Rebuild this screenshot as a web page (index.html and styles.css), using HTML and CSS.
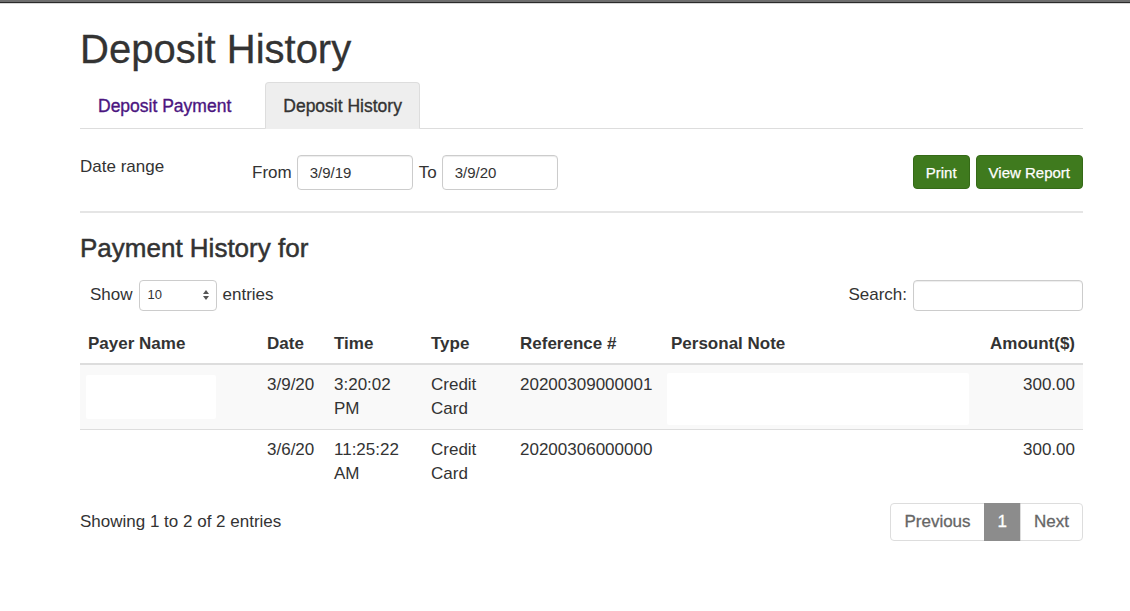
FILE: index.html
```html
<!DOCTYPE html>
<html lang="en">
  <head>
    <meta charset="UTF-8" />
    <meta name="viewport" content="width=device-width, initial-scale=1.0" />
    <title>Deposit History</title>
    <link rel="stylesheet" href="styles.css">
  </head>
  <body>
    <div class="top-bar"></div>
    <div class="container">
      <h1 class="page-title">Deposit History</h1>

      <ul class="nav-tabs">
        <li><a href="#" class="tab-link">Deposit Payment</a></li>
        <li class="active"><a href="#" class="tab-link">Deposit History</a></li>
      </ul>

      <div class="filter-row">
        <div class="filter-label">Date range</div>
        <div class="filter-dates">
          <label>From</label>
          <input type="text" class="form-control date-input" value="3/9/19" />
          <label>To</label>
          <input type="text" class="form-control date-input" value="3/9/20" />
        </div>
        <div class="filter-actions">
          <button class="btn btn-green" type="button">Print</button>
          <button class="btn btn-green" type="button">View Report</button>
        </div>
      </div>

      <hr class="divider" />

      <h3 class="section-title">Payment History for</h3>

      <div class="dt-top">
        <div class="dt-length">
          Show
          <span class="select-box">10
            <svg width="8" height="12" viewBox="0 0 8 12"><path d="M4 1 L7 5 H1 Z M4 11 L7 7 H1 Z" fill="#555"/></svg>
          </span>
          entries
        </div>
        <div class="dt-search">
          Search:
          <input type="text" class="form-control search-input" />
        </div>
      </div>

      <table class="history-table">
        <colgroup>
          <col style="width: 179px" />
          <col style="width: 67px" />
          <col style="width: 97px" />
          <col style="width: 89px" />
          <col style="width: 151px" />
          <col style="width: 314px" />
          <col />
        </colgroup>
        <thead>
          <tr>
            <th>Payer Name</th>
            <th>Date</th>
            <th>Time</th>
            <th>Type</th>
            <th>Reference #</th>
            <th>Personal Note</th>
            <th class="num">Amount($)</th>
          </tr>
        </thead>
        <tbody>
          <tr class="striped">
            <td><div class="blank blank-name"></div></td>
            <td>3/9/20</td>
            <td>3:20:02<br />PM</td>
            <td>Credit<br />Card</td>
            <td>20200309000001</td>
            <td><div class="blank blank-note"></div></td>
            <td class="num">300.00</td>
          </tr>
          <tr>
            <td></td>
            <td>3/6/20</td>
            <td>11:25:22<br />AM</td>
            <td>Credit<br />Card</td>
            <td>20200306000000</td>
            <td></td>
            <td class="num">300.00</td>
          </tr>
        </tbody>
      </table>

      <div class="dt-bottom">
        <div class="dt-info">Showing 1 to 2 of 2 entries</div>
        <ul class="pagination">
          <li><a href="#">Previous</a></li>
          <li class="active"><a href="#">1</a></li>
          <li><a href="#">Next</a></li>
        </ul>
      </div>
    </div>
  </body>
</html>
```

FILE: styles.css
```css
html,
body {
  margin: 0;
  padding: 0;
}

body {
  font-family: "Liberation Sans", Arial, sans-serif;
  font-size: 17px;
  line-height: 1.42857;
  color: #333;
  background: #fff;
}

.top-bar {
  height: 2px;
  background: #6e6e6e;
  border-bottom: 1px solid #2a2a2a;
  box-shadow: 0 1px 0 #d8d8d8;
}

.container {
  width: 1003px;
  margin-left: 80px;
}

.page-title {
  font-size: 40px;
  font-weight: 500;
  line-height: 1.1;
  margin: 24px 0 11px;
  -webkit-text-stroke: 0.3px #333;
}

/* tabs */
.nav-tabs {
  list-style: none;
  margin: 0;
  padding: 0;
  display: flex;
  border-bottom: 1px solid #ddd;
}

.nav-tabs li {
  margin-bottom: -1px;
  margin-right: 16px;
}

.nav-tabs .tab-link {
  display: block;
  padding: 12px 17px 11px;
  font-size: 17.5px;
  color: #4b1580;
  text-decoration: none;
  border: 1px solid transparent;
  border-radius: 4px 4px 0 0;
  line-height: 22px;
  -webkit-text-stroke: 0.35px currentColor;
}

.nav-tabs li.active .tab-link {
  color: #333;
  background: #eee;
  border-color: #ddd;
  border-bottom-color: #eee;
}

/* date filter */
.filter-row {
  display: flex;
  align-items: flex-start;
  padding-top: 26px;
}

.filter-label {
  width: 172px;
  line-height: 24px;
}

.filter-dates {
  display: flex;
  align-items: center;
  gap: 5px;
  flex: 1;
}

.filter-dates label {
  line-height: 35px;
}

.form-control {
  font-family: "Liberation Sans", Arial, sans-serif;
  font-size: 15px;
  color: #333;
  border: 1px solid #ccc;
  border-radius: 4px;
  box-sizing: border-box;
  box-shadow: inset 0 1px 1px rgba(0, 0, 0, 0.075);
  outline: none;
}

.date-input {
  width: 116px;
  height: 35px;
  padding: 0 12px;
}

.filter-dates .date-input:first-of-type {
  margin-right: 1px;
}

.filter-actions {
  display: flex;
  gap: 6px;
}

.btn {
  font-family: "Liberation Sans", Arial, sans-serif;
  font-size: 15px;
  height: 34px;
  padding: 0 12px;
  border-radius: 4px;
  cursor: pointer;
  -webkit-text-stroke: 0.25px #fff;
}

.btn-green {
  color: #fff;
  background: #3f7a1e;
  border: 1px solid #356a17;
}

.divider {
  border: 0;
  border-top: 2px solid #e5e5e5;
  margin: 21px 0 0;
}

.section-title {
  font-size: 26px;
  font-weight: 500;
  line-height: 1.1;
  margin: 21px 0 17px;
  -webkit-text-stroke: 0.5px #333;
}

/* datatable controls */
.dt-top {
  display: flex;
  justify-content: space-between;
  align-items: center;
  padding-left: 10px;
  margin-bottom: 13px;
}

.dt-length,
.dt-search {
  display: flex;
  align-items: center;
  gap: 6px;
}

.select-box {
  display: inline-flex;
  align-items: center;
  justify-content: space-between;
  box-sizing: border-box;
  width: 78px;
  height: 31px;
  padding: 0 6px 0 8px;
  font-size: 13px;
  border: 1px solid #ccc;
  border-radius: 4px;
}

.search-input {
  width: 170px;
  height: 31px;
  padding: 0 8px;
}

/* table */
.history-table {
  width: 100%;
  border-collapse: collapse;
  table-layout: fixed;
}

.history-table th,
.history-table td {
  padding: 8px;
  text-align: left;
  vertical-align: top;
  line-height: 24px;
}

.history-table th {
  font-weight: bold;
  border-bottom: 2px solid #ddd;
  padding-bottom: 7px;
}

.history-table td {
  border-top: 1px solid #ddd;
}

.history-table tbody tr:first-child td {
  border-top: 0;
}

.history-table .num {
  text-align: right;
}

.history-table tr.striped td {
  background: #f9f9f9;
}

.blank {
  background: #fff;
  border-radius: 2px;
}

.blank-name {
  width: 130px;
  height: 44px;
  margin: 2px 0 0 -2px;
}

.blank-note {
  width: 302px;
  height: 52px;
  margin: 0 0 -4px -4px;
}

/* footer */
.dt-bottom {
  display: flex;
  justify-content: space-between;
  align-items: flex-start;
  padding-top: 9px;
}

.dt-info {
  padding-top: 7px;
}

.pagination {
  list-style: none;
  display: flex;
  margin: 0;
  padding: 0;
}

.pagination a {
  display: block;
  padding: 6px 13px;
  line-height: 24px;
  color: #666;
  text-decoration: none;
  border: 1px solid #ddd;
  margin-left: -1px;
  -webkit-text-stroke: 0.3px currentColor;
}

.pagination li:first-child a {
  border-radius: 4px 0 0 4px;
}

.pagination li:last-child a {
  border-radius: 0 4px 4px 0;
}

.pagination li.active a {
  background: #8c8c8c;
  border-color: #8c8c8c;
  color: #fff;
}
```
